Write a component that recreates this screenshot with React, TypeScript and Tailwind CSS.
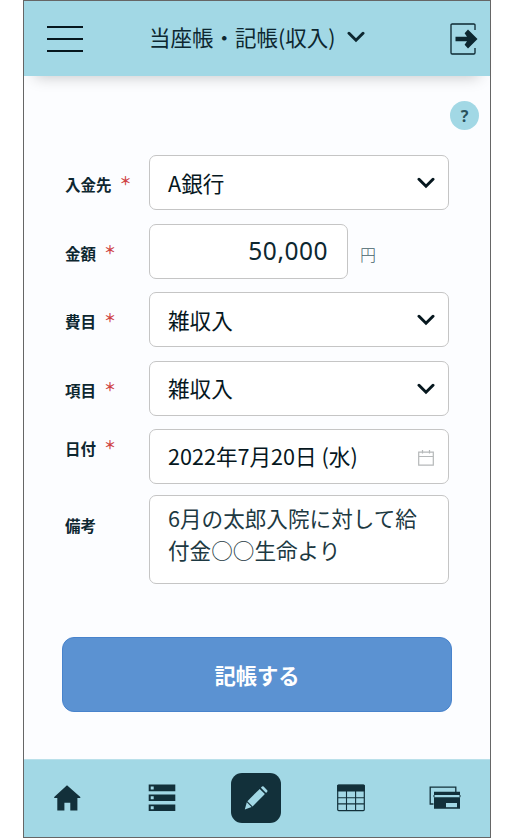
import React from "react";

type FormRowProps = {
  label: string;
  required?: boolean;
  labelClass?: string;
  children: React.ReactNode;
};

const ChevronDown: React.FC = () => (
  <svg width="18" height="12" viewBox="0 0 18 12" fill="none" className="shrink-0">
    <path d="M2 2.3L9 9.2L16 2.3" stroke="currentColor" strokeWidth="3" strokeLinecap="round" />
  </svg>
);

const FormRow: React.FC<FormRowProps> = ({ label, required, labelClass, children }) => (
  <div className="flex items-center">
    <div className={`flex w-[84px] shrink-0 text-[15.5px] font-bold leading-6 ${labelClass ?? ""}`}>
      <span>{label}</span>
      {required && (
        <span className="ml-[8px] -mt-[3px] text-[12px] font-bold text-[#cf4444]">＊</span>
      )}
    </div>
    {children}
  </div>
);

const SelectField: React.FC<{ value: string }> = ({ value }) => (
  <button className="flex h-[55px] w-[300px] items-center justify-between rounded-[7px] border border-[#c5c5c5] bg-white pl-[18px] pr-[13px] pt-px text-[21.6px] text-[#06171e]">
    <span>{value}</span>
    <ChevronDown />
  </button>
);

const Header: React.FC = () => (
  <header className="relative flex h-[75px] shrink-0 items-center bg-[#a2d8e5] pl-[23px] pr-[12px] text-[#0d2730] shadow-[0_12px_14px_-11px_rgba(0,0,0,0.22)]">
    <button className="flex w-9 flex-col gap-[10px] text-[#06171e]">
      <span className="h-[2px] bg-current" />
      <span className="h-[2px] bg-current" />
      <span className="h-[2px] bg-current" />
    </button>
    <button className="ml-[66px] -mt-[2px] flex items-center whitespace-nowrap text-[21.5px]">
      <span>当座帳・記帳(収入)</span>
      <span className="ml-[11px] -mt-[2px]">
        <ChevronDown />
      </span>
    </button>
    <svg width="28" height="32" viewBox="0 0 28 32" fill="none" className="ml-auto shrink-0">
      <path
        d="M25 7V2.2Q25 1 23.8 1H2.2Q1 1 1 2.2V29.8Q1 31 2.2 31H23.8Q25 31 25 29.8V25"
        stroke="currentColor"
        strokeWidth="1.3"
      />
      <path d="M5.5 13.8H17L14.6 10.2L18 6.6L27.5 16L18 25.4L14.6 21.8L17 18.2H5.5Z" fill="currentColor" />
    </svg>
  </header>
);

const BottomNav: React.FC = () => (
  <nav className="flex h-[78px] shrink-0 items-center justify-between border-t border-[#b9e0ea] bg-[#a2d8e5] pb-[2px] pl-[18px] pr-5 text-[#12303a]">
    <button className="flex size-[50px] items-center justify-center pt-px">
      <svg width="28" height="28" viewBox="0 0 28 28" fill="currentColor">
        <path d="M14 1.3L27.3 13V14H24.4V26.5H17.3V18.7H11.4V26.5H4.3V14H1.2V13Z" />
      </svg>
    </button>
    <button className="flex size-[50px] items-center justify-center pt-px">
      <svg width="28" height="28" viewBox="0 0 28 28" fill="currentColor">
        <path d="M.7.6H27.3V7.2H.7ZM.7 10.5H27.3V17.1H.7ZM.7 20.5H27.3V27.1H.7Z" />
        <path d="M2.7 2.4H5.7V5.4H2.7ZM2.7 12.3H5.7V15.3H2.7ZM2.7 22.3H5.7V25.3H2.7Z" fill="#a2d8e5" />
      </svg>
    </button>
    <button className="flex size-[50px] items-center justify-center rounded-[11px] bg-[#12303a] text-[#a2d8e5]">
      <svg width="26" height="26" viewBox="0 0 26 26" fill="currentColor">
        <path d="M4.4 16.2L16.7 3.9L21.9 9.1L9.6 21.4Z" />
        <path d="M17.9 2.7L19 1.6Q19.8.8 20.6 1.6L24.2 5.2Q25 6 24.2 6.8L23.1 7.9Z" />
        <path d="M3.8 17.3L8.6 22.1L1.8 24.4Z" />
      </svg>
    </button>
    <button className="flex size-[50px] items-center justify-center pt-px">
      <svg width="28" height="28" viewBox="0 0 28 28" fill="none" stroke="currentColor">
        <rect x=".7" y="1.2" width="26.6" height="25.4" rx="1" strokeWidth="1.2" />
        <path d="M.7 1.2H27.3V7H.7Z" fill="currentColor" />
        <path d="M9.5 7V26.5M18.6 7V26.5M1 13.7H27M1 19.9H27" strokeWidth="1.1" />
      </svg>
    </button>
    <button className="flex size-[50px] items-center justify-center pt-px">
      <svg width="32" height="28" viewBox="0 0 32 28" fill="none">
        <path d="M4.5 20H1.2V3.2H26.8V8" stroke="currentColor" strokeWidth="1.3" />
        <path d="M5 7.7H31V11H5ZM5 13.2H31V24.7H5Z" fill="currentColor" />
        <path d="M5 11V13.2M31 11V13.2" stroke="currentColor" />
        <path d="M17 19H28V23.2H17Z" fill="#a2d8e5" />
      </svg>
    </button>
  </nav>
);

export default function App() {
  return (
    <div className="flex h-[838px] w-[514px] justify-center bg-white font-['Noto_Sans_CJK_JP',sans-serif] text-[#0d2730]">
      <div className="flex w-[468px] flex-col border border-[#666] bg-[#fcfdff]">
        <Header />
        <main className="flex flex-1 flex-col">
          <button className="mt-[25px] mr-[11px] flex size-[29px] items-center justify-center self-end rounded-full bg-[#a2d8e5] font-['Noto_Sans',sans-serif] text-[16px] font-bold text-[#29525d]">
            ?
          </button>
          <div className="mt-[25.4px] flex flex-col pl-[41px]">
            <div className="flex flex-col gap-[13.4px]">
              <FormRow label="入金先" required labelClass="mt-[3px]">
                <SelectField value="A銀行" />
              </FormRow>
              <FormRow label="金額" required labelClass="mt-[3px]">
                <div className="flex h-[55px] w-[199px] items-center justify-end rounded-[7px] border border-[#c5c5c5] bg-white pr-[19px] font-['Noto_Sans',sans-serif] text-[24.5px] tracking-[0.5px]">
                  50,000
                </div>
                <span className="ml-3 mt-[6px] text-[16px] font-light text-[#44616a]">円</span>
              </FormRow>
              <FormRow label="費目" required labelClass="mt-[3px]">
                <SelectField value="雑収入" />
              </FormRow>
              <FormRow label="項目" required labelClass="mt-[3px]">
                <SelectField value="雑収入" />
              </FormRow>
              <FormRow label="日付" required labelClass="-mt-[16px]">
                <button className="flex h-[55px] w-[300px] items-center justify-between rounded-[7px] border border-[#c5c5c5] bg-white pl-[18px] pr-[14px] text-[21.6px] text-[#06171e]">
                  <span>2022年7月20日 (水)</span>
                  <svg width="16" height="16" viewBox="0 0 16 16" fill="none" stroke="#b5b8b9" className="mt-[3px]">
                    <path d="M.7 2.2H15.3V15.2H.7ZM.7 6.5H15.3M4.5 0V3.5M11.5 0V3.5" strokeWidth="1.2" />
                  </svg>
                </button>
              </FormRow>
            </div>
            <div className="mt-[11px]">
              <FormRow label="備考" labelClass="-mt-[28px]">
                <p className="h-[89px] w-[300px] rounded-[7px] border border-[#c5c5c5] bg-white px-[18px] pt-[6px] text-[21.6px] leading-8 text-[#1d3942]">
                  6月の太郎入院に対して給付金○○生命より
                </p>
              </FormRow>
            </div>
          </div>
          <button className="mx-[38px] mt-[53px] h-[75px] rounded-[12px] border border-[#4883cc] bg-[#5b92d2] pt-px text-[21.3px] font-bold text-white">
            記帳する
          </button>
        </main>
        <BottomNav />
      </div>
    </div>
  );
}
